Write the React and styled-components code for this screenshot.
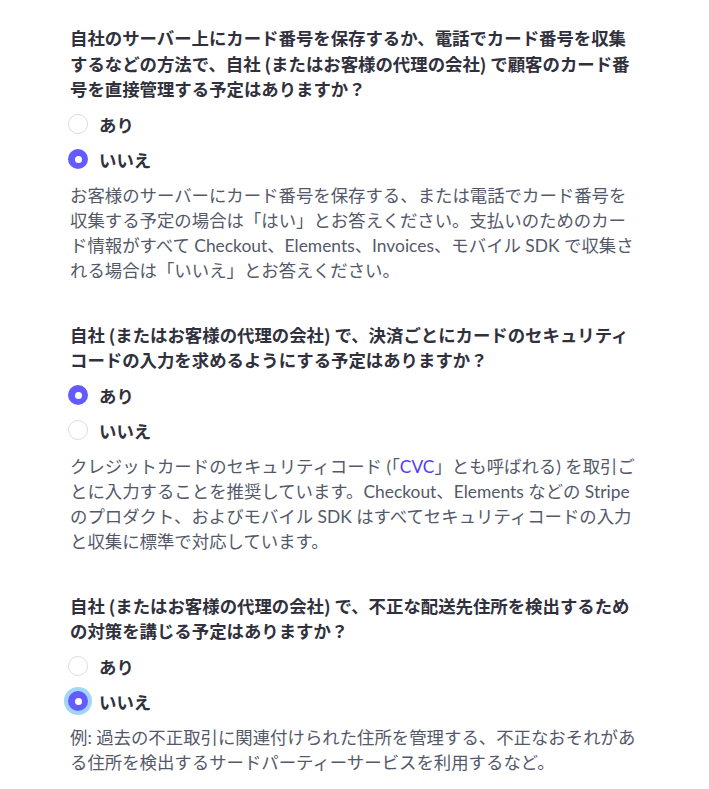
import React, { useState } from "react";
import styled, { createGlobalStyle } from "styled-components";

const Global = createGlobalStyle`
  html, body { margin: 0; padding: 0; background: #ffffff; }
  body { font-family: Lato, "Noto Sans CJK JP", sans-serif; }
`;

const Page = styled.div`
  padding: 25px 0 20px 70px;
  width: 566px;
  display: flex;
  flex-direction: column;
  gap: 39px;
`;

const Section = styled.fieldset`
  border: 0;
  margin: 0;
  padding: 0;
  min-width: 0;
  display: flex;
  flex-direction: column;
`;

const Question = styled.legend`
  padding: 0;
  font-family: "Noto Sans CJK JP", sans-serif;
  font-size: 17.4px;
  line-height: 25.5px;
  font-weight: 700;
  color: #30313d;
`;

const Options = styled.div`
  display: flex;
  flex-direction: column;
  padding: 5px 0 6px;
`;

const OptionRow = styled.label`
  display: flex;
  align-items: center;
  gap: 11px;
  height: 35px;
  margin-left: -2px;
  cursor: pointer;
`;

const RadioCircle = styled.span`
  box-sizing: border-box;
  width: 20px;
  height: 20px;
  border-radius: 50%;
  flex: none;
  display: flex;
  align-items: center;
  justify-content: center;
  background: ${(p) => (p.$checked ? "#635bff" : "#ffffff")};
  border: ${(p) => (p.$checked ? "none" : "1.5px solid #d8dee4")};
  box-shadow: ${(p) => (p.$focused ? "0 0 0 4px #a3d5f8" : "none")};
  &::after {
    content: "";
    display: ${(p) => (p.$checked ? "block" : "none")};
    width: 7px;
    height: 7px;
    border-radius: 50%;
    background: #ffffff;
  }
`;

const HiddenInput = styled.input`
  position: absolute;
  opacity: 0;
  width: 0;
  height: 0;
  margin: 0;
`;

const OptionLabel = styled.span`
  font-family: "Noto Sans CJK JP", sans-serif;
  font-size: 17.4px;
  line-height: 25px;
  font-weight: 700;
  color: #30313d;
`;

const Help = styled.p`
  margin: 0;
  font-family: Lato, "Noto Sans CJK JP", sans-serif;
  font-size: 17.4px;
  line-height: 25px;
  color: #545969;
`;

const Link = styled.a`
  color: #533afd;
  text-decoration: none;
`;

const questions = [
  {
    id: "q1",
    text: "自社のサーバー上にカード番号を保存するか、電話でカード番号を収集するなどの方法で、自社 (またはお客様の代理の会社) で顧客のカード番号を直接管理する予定はありますか？",
    value: "no",
    help: "お客様のサーバーにカード番号を保存する、または電話でカード番号を収集する予定の場合は「はい」とお答えください。支払いのためのカード情報がすべて Checkout、Elements、Invoices、モバイル SDK で収集される場合は「いいえ」とお答えください。",
  },
  {
    id: "q2",
    text: "自社 (またはお客様の代理の会社) で、決済ごとにカードのセキュリティコードの入力を求めるようにする予定はありますか？",
    value: "yes",
    help: (
      <>
        クレジットカードのセキュリティコード (「<Link href="#">CVC</Link>」とも呼ばれる) を取引ごとに入力することを推奨しています。Checkout、Elements などの Stripe のプロダクト、およびモバイル SDK はすべてセキュリティコードの入力と収集に標準で対応しています。
      </>
    ),
  },
  {
    id: "q3",
    text: "自社 (またはお客様の代理の会社) で、不正な配送先住所を検出するための対策を講じる予定はありますか？",
    value: "no",
    focused: true,
    help: "例: 過去の不正取引に関連付けられた住所を管理する、不正なおそれがある住所を検出するサードパーティーサービスを利用するなど。",
  },
];

const options = [
  { value: "yes", label: "あり" },
  { value: "no", label: "いいえ" },
];

export default function App() {
  const [answers, setAnswers] = useState(
    Object.fromEntries(questions.map((q) => [q.id, q.value]))
  );
  return (
    <>
      <Global />
      <Page>
        {questions.map((q) => (
          <Section key={q.id}>
            <Question>{q.text}</Question>
            <Options>
              {options.map((o) => {
                const checked = answers[q.id] === o.value;
                return (
                  <OptionRow key={o.value}>
                    <HiddenInput
                      type="radio"
                      name={q.id}
                      value={o.value}
                      checked={checked}
                      onChange={() => setAnswers({ ...answers, [q.id]: o.value })}
                    />
                    <RadioCircle $checked={checked} $focused={checked && q.focused} />
                    <OptionLabel>{o.label}</OptionLabel>
                  </OptionRow>
                );
              })}
            </Options>
            <Help>{q.help}</Help>
          </Section>
        ))}
      </Page>
    </>
  );
}
